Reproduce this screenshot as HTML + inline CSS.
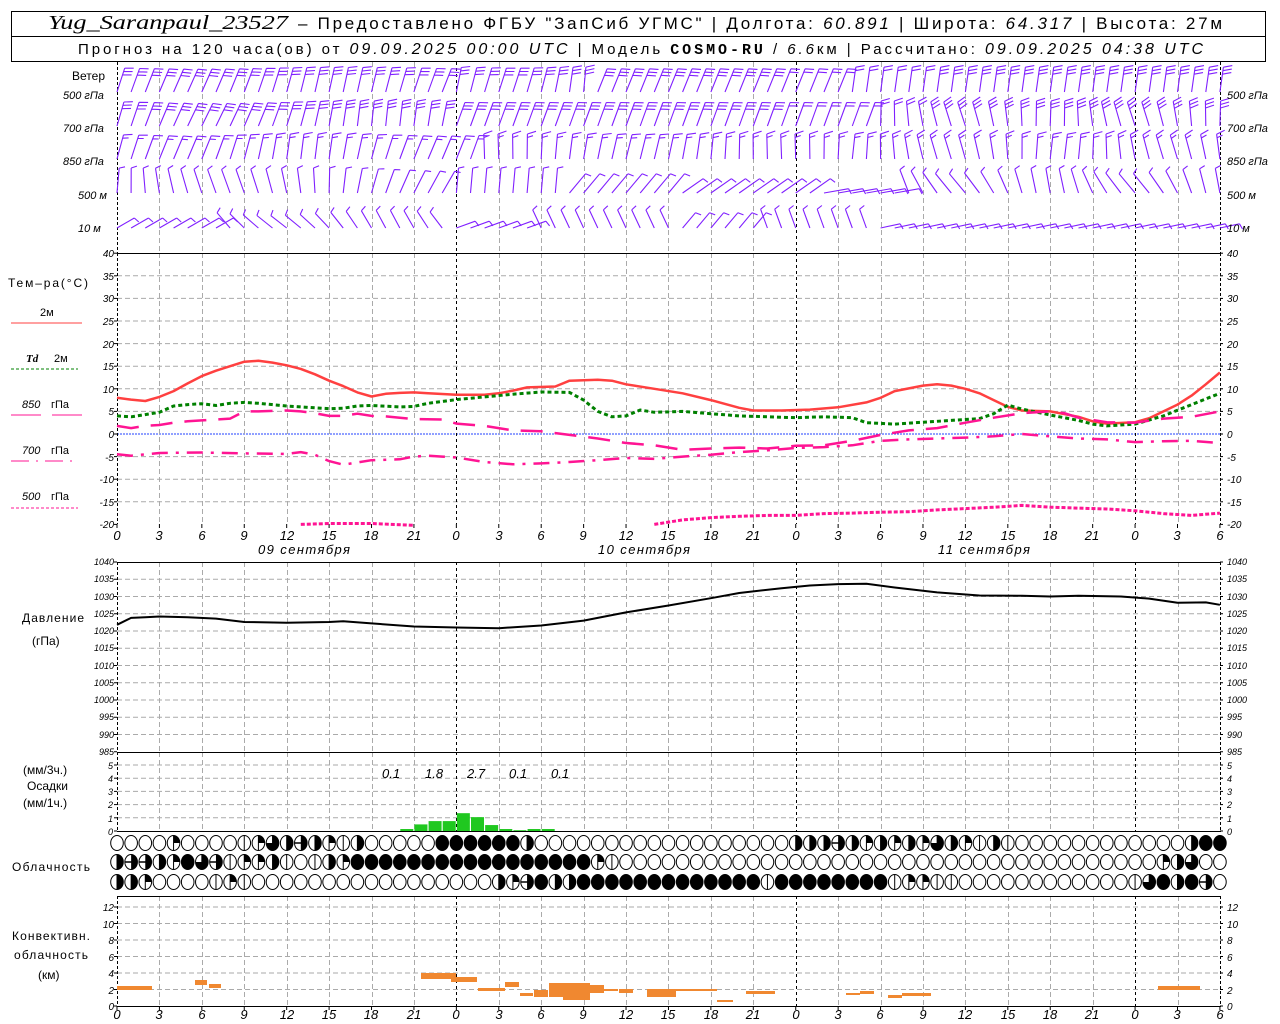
<!DOCTYPE html>
<html><head><meta charset="utf-8">
<style>
html,body{margin:0;padding:0;background:#fff;width:1280px;height:1024px;overflow:hidden}
svg{display:block}
text{font-family:"Liberation Sans",sans-serif;fill:#000}
.t{font-size:10px;font-style:italic}
.h{font-size:13px;font-style:italic}
.l{font-size:12px}
</style></head><body>
<svg id="s" width="1280" height="1024" xmlns="http://www.w3.org/2000/svg">
<rect x="11.5" y="11.5" width="1254" height="50" fill="none" stroke="#000"/>
<line x1="11" y1="36.5" x2="1266" y2="36.5" stroke="#000"/>
<text x="48" y="29" textLength="240" lengthAdjust="spacingAndGlyphs" style="font-family:'Liberation Serif',serif;font-size:20px;font-style:italic">Yug_Saranpaul_23527</text>
<text x="298" y="29" textLength="924" lengthAdjust="spacing" style="font-size:17px">– Предоставлено ФГБУ "ЗапСиб УГМС" | Долгота: <tspan font-style="italic">60.891</tspan> | Широта: <tspan font-style="italic">64.317</tspan> | Высота: 27м</text>
<text x="78" y="54" textLength="1125" lengthAdjust="spacing" style="font-size:15px">Прогноз на 120 часа(ов) от <tspan font-style="italic" font-size="16">09.09.2025 00:00 UTC</tspan>  | Модель <tspan font-family="Liberation Mono" font-weight="bold">COSMO-RU</tspan> / <tspan font-style="italic">6.6</tspan>км | Рассчитано: <tspan font-style="italic" font-size="16">09.09.2025 04:38 UTC</tspan></text>
<g id="grid"></g>
<g id="data"></g>
<text x="72" y="80" class="l">Ветер</text>
<text x="63" y="99" class="t" style="font-size:11px">500 гПа</text>
<text x="63" y="132" class="t" style="font-size:11px">700 гПа</text>
<text x="63" y="165" class="t" style="font-size:11px">850 гПа</text>
<text x="78" y="199" class="t" style="font-size:11px">500 м</text>
<text x="78" y="232" class="t" style="font-size:11px">10  м</text>
<text x="1227" y="99" class="t" style="font-size:11px">500 гПа</text>
<text x="1227" y="132" class="t" style="font-size:11px">700 гПа</text>
<text x="1227" y="165" class="t" style="font-size:11px">850 гПа</text>
<text x="1227" y="199" class="t" style="font-size:11px">500 м</text>
<text x="1227" y="232" class="t" style="font-size:11px">10  м</text>
<text x="8" y="287" class="l" textLength="80">Тем–ра(°C)</text>
<text x="40" y="316" style="font-size:11px">2м</text>
<line x1="11" y1="323" x2="82" y2="323" stroke="#ff4040"/>
<text x="26" y="362" style="font-size:11px;font-style:italic;font-weight:bold;font-family:'Liberation Serif'">Td</text><text x="54" y="362" style="font-size:11px">2м</text>
<line x1="11" y1="369" x2="78" y2="369" stroke="#008000" stroke-dasharray="3,2"/>
<text x="22" y="408" class="t" style="font-size:11px">850</text><text x="51" y="408" style="font-size:11px">гПа</text>
<line x1="11" y1="415" x2="41" y2="415" stroke="#ff1493"/><line x1="52" y1="415" x2="82" y2="415" stroke="#ff1493"/>
<text x="22" y="454" class="t" style="font-size:11px">700</text><text x="51" y="454" style="font-size:11px">гПа</text>
<line x1="11" y1="461" x2="78" y2="461" stroke="#ff1493" stroke-dasharray="18,7,2,7"/>
<text x="22" y="500" class="t" style="font-size:11px">500</text><text x="51" y="500" style="font-size:11px">гПа</text>
<line x1="11" y1="508" x2="78" y2="508" stroke="#ff1493" stroke-dasharray="3,2"/>
<text x="22" y="622" class="l" textLength="62">Давление</text>
<text x="32" y="645" class="l">(гПа)</text>
<text x="23" y="774" class="l">(мм/3ч.)</text>
<text x="27" y="790" class="l">Осадки</text>
<text x="23" y="807" class="l">(мм/1ч.)</text>
<text x="12" y="871" class="l" textLength="78">Облачность</text>
<text x="12" y="940" class="l" textLength="78">Конвективн.</text>
<text x="14" y="959" class="l" textLength="74">облачность</text>
<text x="38" y="979" class="l">(км)</text>
<g class="h">
<text x="258" y="554" style="font-size:13px" textLength="92">09  сентября</text>
<text x="598" y="554" style="font-size:13px" textLength="92">10  сентября</text>
<text x="938" y="554" style="font-size:13px" textLength="92">11  сентября</text>
</g>
<g style="font-size:13px;font-style:italic">
<text x="382" y="778">0.1</text><text x="425" y="778">1.8</text><text x="467" y="778">2.7</text><text x="509" y="778">0.1</text><text x="551" y="778">0.1</text>
</g>
<g class="h" text-anchor="middle">
<text x="117" y="540">0</text><text x="159" y="540">3</text><text x="202" y="540">6</text><text x="244" y="540">9</text><text x="287" y="540">12</text><text x="329" y="540">15</text><text x="371" y="540">18</text><text x="414" y="540">21</text><text x="456" y="540">0</text><text x="499" y="540">3</text><text x="541" y="540">6</text><text x="583" y="540">9</text><text x="626" y="540">12</text><text x="668" y="540">15</text><text x="711" y="540">18</text><text x="753" y="540">21</text><text x="796" y="540">0</text><text x="838" y="540">3</text><text x="880" y="540">6</text><text x="923" y="540">9</text><text x="965" y="540">12</text><text x="1008" y="540">15</text><text x="1050" y="540">18</text><text x="1092" y="540">21</text><text x="1135" y="540">0</text><text x="1177" y="540">3</text><text x="1220" y="540">6</text>
</g>
<g class="h" text-anchor="middle">
<text x="117" y="1019">0</text><text x="159" y="1019">3</text><text x="202" y="1019">6</text><text x="244" y="1019">9</text><text x="287" y="1019">12</text><text x="329" y="1019">15</text><text x="371" y="1019">18</text><text x="414" y="1019">21</text><text x="456" y="1019">0</text><text x="499" y="1019">3</text><text x="541" y="1019">6</text><text x="583" y="1019">9</text><text x="626" y="1019">12</text><text x="668" y="1019">15</text><text x="711" y="1019">18</text><text x="753" y="1019">21</text><text x="796" y="1019">0</text><text x="838" y="1019">3</text><text x="880" y="1019">6</text><text x="923" y="1019">9</text><text x="965" y="1019">12</text><text x="1008" y="1019">15</text><text x="1050" y="1019">18</text><text x="1092" y="1019">21</text><text x="1135" y="1019">0</text><text x="1177" y="1019">3</text><text x="1220" y="1019">6</text>
</g>
<g class="t" text-anchor="end">
<text x="114" y="257">40</text><text x="114" y="280">35</text><text x="114" y="302">30</text><text x="114" y="325">25</text><text x="114" y="348">20</text><text x="114" y="370">15</text><text x="114" y="393">10</text><text x="114" y="415">5</text><text x="114" y="438">0</text><text x="114" y="461">-5</text><text x="114" y="483">-10</text><text x="114" y="506">-15</text><text x="114" y="528">-20</text>
</g>
<g class="t">
<text x="1227" y="257">40</text><text x="1227" y="280">35</text><text x="1227" y="302">30</text><text x="1227" y="325">25</text><text x="1227" y="348">20</text><text x="1227" y="370">15</text><text x="1227" y="393">10</text><text x="1227" y="415">5</text><text x="1227" y="438">0</text><text x="1227" y="461">-5</text><text x="1227" y="483">-10</text><text x="1227" y="506">-15</text><text x="1227" y="528">-20</text>
</g>
<g class="t" text-anchor="end" style="font-size:9px">
<text x="114" y="565">1040</text><text x="114" y="582">1035</text><text x="114" y="600">1030</text><text x="114" y="617">1025</text><text x="114" y="634">1020</text><text x="114" y="651">1015</text><text x="114" y="669">1010</text><text x="114" y="686">1005</text><text x="114" y="703">1000</text><text x="114" y="720">995</text><text x="114" y="738">990</text><text x="114" y="755">985</text>
</g>
<g class="t" style="font-size:9px">
<text x="1227" y="565">1040</text><text x="1227" y="582">1035</text><text x="1227" y="600">1030</text><text x="1227" y="617">1025</text><text x="1227" y="634">1020</text><text x="1227" y="651">1015</text><text x="1227" y="669">1010</text><text x="1227" y="686">1005</text><text x="1227" y="703">1000</text><text x="1227" y="720">995</text><text x="1227" y="738">990</text><text x="1227" y="755">985</text>
</g>
<g class="t" text-anchor="end" style="font-size:9px">
<text x="113" y="769">5</text><text x="113" y="782">4</text><text x="113" y="795">3</text><text x="113" y="808">2</text><text x="113" y="822">1</text><text x="113" y="835">0</text>
</g>
<g class="t" style="font-size:9px">
<text x="1227" y="769">5</text><text x="1227" y="782">4</text><text x="1227" y="795">3</text><text x="1227" y="808">2</text><text x="1227" y="822">1</text><text x="1227" y="835">0</text>
</g>
<g class="t" text-anchor="end">
<text x="114" y="911">12</text><text x="114" y="928">10</text><text x="114" y="944">8</text><text x="114" y="961">6</text><text x="114" y="977">4</text><text x="114" y="994">2</text><text x="114" y="1010">0</text>
</g>
<g class="t">
<text x="1227" y="911">12</text><text x="1227" y="928">10</text><text x="1227" y="944">8</text><text x="1227" y="961">6</text><text x="1227" y="977">4</text><text x="1227" y="994">2</text><text x="1227" y="1010">0</text>
</g>
</svg>
<script>
(function(){
var NS="http://www.w3.org/2000/svg";
var G=document.getElementById('grid'),D=document.getElementById('data');
function X(h){return 117+h*14.14;}
function el(p,t,a){var e=document.createElementNS(NS,t);for(var k in a)e.setAttribute(k,a[k]);p.appendChild(e);return e;}
function L(p,x1,y1,x2,y2,s,w,da){var a={x1:x1,y1:y1,x2:x2,y2:y2,stroke:s,'stroke-width':w||1};if(da)a['stroke-dasharray']=da;return el(p,'line',a);}
var panels=[[62,253],[253,524],[562,752],[752,831],[896,1006]];
for(var T=35;T>=-15;T-=5){var y=434-4.52*T;if(T!==0)L(G,117,y,1220,y,'#aaa',1,'5,3');}
for(var p=1035;p>985;p-=5){var y=562+(1040-p)*3.45;L(G,117,y,1220,y,'#aaa',1,'5,3');}
for(var k=1;k<=5;k++){var y=831-13.2*k;L(G,117,y,1220,y,'#aaa',1,'5,3');}
for(var k=1;k<=6;k++){var y=1006-16.5*k;L(G,117,y,1220,y,'#aaa',1,'5,3');}
L(G,117,434,1220,434,'#2040ff',1,'2,1');
panels.forEach(function(pn){
 for(var h=0;h<=78;h+=3){var x=Math.round(X(h))+0.5;var day=(h%24===0);
  if(h===0||h===78)continue;
  L(G,x,pn[0],x,pn[1],day?'#000':'#aaa',1,day?'3,3':'5,3');}
 L(G,117.5,pn[0],117.5,pn[1],'#000',1,'3,2');
 L(G,1220.5,pn[0],1220.5,pn[1],'#000',1,'3,2');
});
[253,562,752,831,896,1006].forEach(function(y){L(G,117,y+0.5,1221,y+0.5,'#000',1);});
function ticks(ys){ys.forEach(function(y){L(G,114,y,117,y,'#000');L(G,1220,y,1223,y,'#000');});}
var ty=[];for(var T=40;T>=-20;T-=5)ty.push(434-4.52*T);ticks(ty);
ty=[];for(var p=1040;p>=985;p-=5)ty.push(562+(1040-p)*3.45);ticks(ty);
ty=[];for(var k=0;k<=5;k++)ty.push(831-13.2*k);ticks(ty);
ty=[];for(var k=0;k<=6;k++)ty.push(1006-16.5*k);ticks(ty);
for(var h=0;h<=78;h+=3){var x=X(h);L(G,x,524,x,528,'#000');L(G,x,1006,x,1010,'#000');}
function curve(pts,fy,st){var d='';pts.forEach(function(q,i){d+=(i?'L':'M')+X(q[0]).toFixed(1)+' '+fy(q[1]).toFixed(1);});var a={d:d,fill:'none','stroke-linejoin':'round'};for(var k in st)a[k]=st[k];el(D,'path',a);}
function ty_(T){return 434-4.52*T;}
curve([[0,8],[1,7.6],[2,7.3],[3,8.2],[4,9.5],[5,11.2],[6,12.8],[7,14],[8,15],[9,16],[10,16.2],[11,15.8],[12,15.2],[13,14.4],[14,13.2],[15,11.8],[16,10.6],[17,9.2],[18,8.3],[19,8.9],[20,9.1],[21,9.2],[22,9],[24,8.7],[26,8.7],[27,9],[28,9.6],[29,10.3],[31,10.5],[32,11.8],[34,12],[35,11.8],[36,11],[38,10],[40,9],[42,7.5],[44,5.8],[45,5.2],[47,5.2],[49,5.4],[51,5.9],[53,7],[54,8],[55,9.5],[57,10.7],[58,11],[59,10.7],[60,10],[61,9],[62,7.5],[63,6],[64,5.2],[66,5],[68,3.8],[69,2.8],[70,2.3],[72,2.6],[73,3.5],[74,5],[75,6.5],[76,8.5],[77,11],[78,13.6]],ty_,{stroke:'#ff4040','stroke-width':2.5});
curve([[0,4],[1,3.8],[2,4.3],[3,4.8],[4,6.2],[5,6.5],[6,6.7],[7,6.3],[8,6.8],[9,7],[10,6.8],[12,6.2],[14,5.8],[15,5.6],[16,5.7],[17,6.2],[18,6.3],[20,6],[21,6.1],[22,6.8],[24,7.6],[26,8.2],[28,8.8],[30,9.3],[32,9.2],[33,7.5],[34,5],[35,3.8],[36,4],[37,5.3],[38,4.8],[40,5],[42,4.5],[44,4],[46,3.8],[48,3.6],[50,3.8],[52,3.6],[53,2.5],[55,2.2],[57,2.6],[59,3],[61,3.4],[62,4.5],[63,6.4],[64,5.5],[66,4.2],[68,3],[69,2.2],[70,1.8],[72,2.2],[74,4],[76,6.5],[78,9]],ty_,{stroke:'#008000','stroke-width':3,'stroke-dasharray':'4,3'});
curve([[0,1.8],[1,1.3],[2,1.8],[3,2],[4,2.5],[5,2.8],[6,3],[8,3.4],[9,5],[10,5],[11,5.1],[12,5.2],[13,5],[14,4.6],[15,4],[16,4],[17,4.5],[18,4],[19,3.9],[20,3.6],[21,3.3],[23,3.2],[24,2.3],[26,1.8],[28,0.8],[30,0.6],[32,-0.2],[34,-1],[36,-2],[38,-2.5],[40,-3.5],[42,-3.2],[44,-3],[46,-3.2],[48,-2.6],[50,-2.5],[52,-1.5],[54,-0.2],[56,0.8],[58,1.3],[60,2.5],[62,3.6],[64,4.6],[66,5],[67,4.6],[68,3.6],[70,2.6],[72,2.5],[74,3.4],[76,3.8],[78,5]],ty_,{stroke:'#ff1493','stroke-width':2.5,'stroke-dasharray':'22,12'});
curve([[0,-4.5],[1,-4.8],[3,-4.2],[6,-4.1],[9,-4.3],[12,-4.4],[13,-4],[14,-4.6],[15,-6],[16,-6.8],[17,-6.3],[18,-5.8],[20,-5.6],[21,-5],[22,-4.8],[23,-5],[24,-5.2],[26,-6.2],[28,-6.7],[30,-6.5],[32,-6.2],[34,-5.8],[36,-5.3],[38,-5.5],[40,-5],[42,-4.6],[44,-4],[46,-3.6],[48,-3.1],[50,-2.9],[52,-2.5],[54,-1.5],[56,-1.2],[58,-1],[60,-0.8],[62,-0.5],[64,0],[66,-0.5],[68,-1],[70,-1.2],[72,-1.8],[74,-1.6],[76,-1.5],[78,-2]],ty_,{stroke:'#ff1493','stroke-width':2.5,'stroke-dasharray':'16,8,3,8'});
curve([[13,-20],[15,-19.8],[18,-19.8],[21,-20.2]],ty_,{stroke:'#ff1493','stroke-width':3,'stroke-dasharray':'4,2'});
curve([[38,-20],[40,-19],[42,-18.5],[44,-18.2],[46,-18],[48,-18],[50,-17.6],[52,-17.5],[54,-17.3],[56,-17.2],[58,-16.8],[60,-16.5],[62,-16.2],[64,-15.8],[66,-16.2],[68,-16.4],[70,-16.6],[72,-17],[74,-17.6],[76,-18],[78,-17.5]],ty_,{stroke:'#ff1493','stroke-width':3,'stroke-dasharray':'4,2'});
function py(p){return 562+(1040-p)*3.45;}
curve([[0,1021.8],[1,1023.8],[2,1024],[3,1024.2],[5,1024],[7,1023.6],[9,1022.6],[12,1022.4],[15,1022.6],[16,1022.8],[18,1022.2],[21,1021.3],[24,1021],[27,1020.8],[30,1021.6],[33,1023],[36,1025.4],[39,1027.4],[42,1029.5],[44,1031],[47,1032.4],[49,1033.2],[51,1033.6],[53,1033.7],[55,1032.6],[58,1031.2],[61,1030.3],[64,1030.2],[66,1030],[68,1030.2],[71,1030],[73,1029.4],[75,1028.2],[77,1028.3],[78,1027.6]],py,{stroke:'#000','stroke-width':2});
[[20,0.15],[21,0.5],[22,0.75],[23,0.75],[24,1.35],[25,1.05],[26,0.45],[27,0.15],[28,0.06],[29,0.15],[30,0.15]].forEach(function(b){var x=X(b[0]);var h=b[1]*13.2;el(D,'rect',{x:x+0.5,y:831-h,width:13,height:h,fill:'#20c820'});});
[[117,152,986,990],[195,207,980,985],[209,221,984,988],[421,456,973,979],[451,477,977,982],[478,505,988,991],[505,519,982,987],[520,533,993,996],[534,548,990,997],[549,590,983,997],[563,590,986,1000],[590,604,985,993],[604,618,989,991],[619,633,989,993],[647,676,989,997],[676,717,989,991],[717,733,1000,1002],[746,775,991,994],[846,860,993,995],[860,874,991,994],[888,902,995,998],[902,931,993,996],[1158,1200,986,990]].forEach(function(b){el(D,'rect',{x:b[0],y:b[2],width:b[1]-b[0],height:b[3]-b[2],fill:'#f08830'});});
var rows=[
"OOOOqOOOOvqthehqvhOOOOOFFFFFFhOOOOOOOOOOOOOOOOOOhhhehqhqhqthqvhvOOOOOOOOOOOOhFF",
"heehqFtevqqhvOvhqFFFFFFFFFFFFFFFFFqvOOOOOOOOOOOOOOOOOOOOOOOOOOOOOOOOOOOOOOqhtOO",
"hhqOOOOvqvOOOOOOOOOOOOOOOOOhqeFhhFFFFFFFFFFFFFvFFFFFFFFvqqvvOOOOOOOOOOOOvtFhFeO"];
var ry=[843,862,882];
rows.forEach(function(r,ri){for(var h=0;h<=78;h++){var c=r[h]||'O';var cx=X(h),cy=ry[ri],rx=6.3,rr=7.5;
 var g=el(D,'g',{});
 el(g,'ellipse',{cx:cx,cy:cy,rx:rx,ry:rr,fill:c==='F'?'#000':'#fff',stroke:'#000','stroke-width':1});
 if(c==='h')el(g,'path',{d:'M'+cx+' '+(cy-rr)+'A'+rx+' '+rr+' 0 0 1 '+cx+' '+(cy+rr)+'Z',fill:'#000'});
 if(c==='q')el(g,'path',{d:'M'+cx+' '+cy+'L'+cx+' '+(cy-rr)+'A'+rx+' '+rr+' 0 0 1 '+(cx+rx)+' '+cy+'Z',fill:'#000'});
 if(c==='t')el(g,'path',{d:'M'+cx+' '+cy+'L'+cx+' '+(cy-rr)+'A'+rx+' '+rr+' 0 1 1 '+(cx-rx)+' '+cy+'Z',fill:'#000'});
 if(c==='v'||c==='h'||c==='q'||c==='t')L(g,cx,cy-rr,cx,cy+rr,'#000',1);
 if(c==='e'){el(g,'path',{d:'M'+cx+' '+(cy-rr)+'A'+rx+' '+rr+' 0 0 1 '+cx+' '+(cy+rr)+'Z',fill:'#000'});L(g,cx-rx,cy,cx+rx,cy,'#000',1.5);}
}});
var W=el(D,'g',{stroke:'#8020ff','stroke-width':1.1,fill:'none'});
var base=[92,126,159,193,228];
var nf=[3,3,2,1,1];
function ang(r,h){
 if(r===0){if(h<24)return 18+6*Math.sin(h*0.3);if(h<34)return 10-8*Math.sin(h*0.4);if(h<52)return 22;return 8;}
 if(r===1){if(h<24)return 16+10*Math.sin(h*0.25);if(h<54)return 20;return -8+10*Math.sin(h*0.5);}
 if(r===2){if(h<26)return 15+8*Math.sin(h*0.35);if(h<52)return 6-8*Math.sin(h*0.3);return -5+12*Math.sin(h*0.4);}
 if(r===3){if(h<24)return 5-25*Math.sin(h*0.2);if(h<32)return 5;if(h<40)return 40;if(h<50)return 55;if(h<56)return 80;return -25+15*Math.sin(h*0.5);}
 if(r===4){if(h<8)return 60;if(h<24)return -40+12*Math.sin(h*0.4);if(h<30)return 70;if(h<40)return -25;if(h<46)return 40;if(h<54)return -20;return 78;}
}
for(var r=0;r<5;r++){for(var h=0;h<=78;h++){
 var a=ang(r,h)*Math.PI/180;var Ln=(r===4)?20:25;
 var x0=X(h),y0=base[r];
 var dx=Math.sin(a),dy=-Math.cos(a);
 var x1=x0+dx*Ln,y1=y0+dy*Ln;
 var d='M'+x0.toFixed(1)+' '+y0+'L'+x1.toFixed(1)+' '+y1.toFixed(1);
 var fa=a+Math.PI*0.40;var fx=Math.sin(fa),fy=-Math.cos(fa);
 var n=nf[r];if(r<2&&h>46&&h<58)n=2;
 for(var k=0;k<n;k++){var px=x1-dx*k*3.5,py2=y1-dy*k*3.5;var fl=(k===n-1&&r>=2)?6:9;
  d+='M'+px.toFixed(1)+' '+py2.toFixed(1)+'l'+(fx*fl).toFixed(1)+' '+(fy*fl).toFixed(1);}
 el(W,'path',{d:d});
}}
})();
</script>
</body></html>
